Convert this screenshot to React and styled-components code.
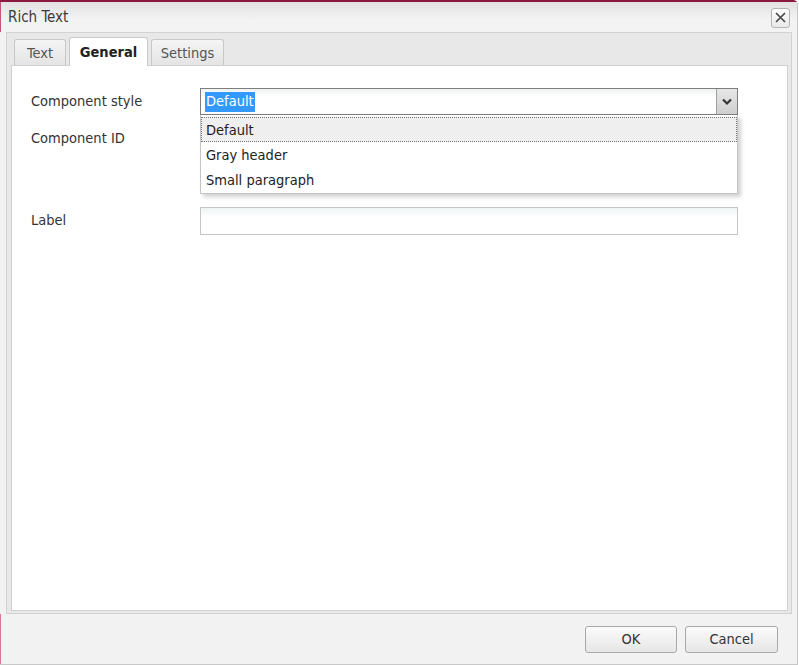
import React from 'react'
import styled, { createGlobalStyle } from 'styled-components'

const GlobalStyle = createGlobalStyle`
  html, body {
    margin: 0;
    padding: 0;
    background: #ffffff;
  }
  body {
    font-family: "DejaVu Sans Condensed", "Liberation Sans", sans-serif;
    font-size: 14.5px;
    color: #2a2a2a;
  }
`

const Dialog = styled.div`
  width: 798px;
  height: 665px;
  box-sizing: border-box;
  display: flex;
  flex-direction: column;
  background: #f2f2f2;
  border-top: 2px solid #8c1a3f;
  border-right: 1px solid #c6c6c6;
  border-top-right-radius: 5px;
`

const TitleBar = styled.div`
  height: 30px;
  flex: none;
  display: flex;
  align-items: center;
  justify-content: space-between;
  padding: 0 7px 0 8px;
  background: linear-gradient(#e2e2e2, #f3f3f3 60%);
  box-shadow: inset 7px 0 0 -6px #c0567a;
`

const Title = styled.span`
  font-size: 15px;
  color: #3a3a3a;
`

const CloseButton = styled.button`
  width: 19px;
  height: 20px;
  padding: 0;
  margin-top: 1px;
  display: flex;
  align-items: center;
  justify-content: center;
  border: 1px solid #b4b4b4;
  border-radius: 3px;
  background: linear-gradient(#fdfdfd, #e9e9e9);
`

const Panel = styled.div`
  flex: 1;
  margin: 0 5px 0 6px;
  display: flex;
  flex-direction: column;
  background: #e8e8e8;
  border: 1px solid #d2d2d2;
  padding: 2px 3px 2px 4px;
`

const TabStrip = styled.div`
  display: flex;
  align-items: flex-end;
  gap: 3px;
  padding-left: 3px;
  height: 30px;
  flex: none;
`

const Tab = styled.div`
  width: ${p => p.$w}px;
  height: ${p => (p.$active ? 29 : 26)}px;
  box-sizing: border-box;
  display: flex;
  align-items: center;
  justify-content: center;
  border: 1px solid #c8c8c8;
  border-bottom: none;
  border-radius: 3px 3px 0 0;
  background: ${p => (p.$active ? '#ffffff' : 'linear-gradient(#f4f4f4, #e4e4e4)')};
  color: ${p => (p.$active ? '#222' : '#555')};
  font-weight: ${p => (p.$active ? 'bold' : 'normal')};
  margin-bottom: ${p => (p.$active ? -1 : 0)}px;
  position: relative;
`

const Content = styled.div`
  flex: 1;
  background: #ffffff;
  border: 1px solid #d0d0d0;
  padding: 22px 0 0 19px;
`

const Form = styled.div`
  display: grid;
  grid-template-columns: 169px 538px;
  row-gap: 10px;
`

const Label = styled.div`
  color: #333;
  padding-top: ${p => p.$top}px;
`

const Field = styled.div`
  position: relative;
  height: ${p => p.$h}px;
  margin-bottom: ${p => p.$mb || 0}px;
`

const SelectBox = styled.div`
  height: 27px;
  box-sizing: border-box;
  display: flex;
  border: 1px solid #7e7e7e;
  background: linear-gradient(#eef2f2, #ffffff 30%);
`

const SelectValue = styled.div`
  flex: 1;
  display: flex;
  align-items: center;
  padding-left: 4px;
`

const Selected = styled.span`
  background: #3399ff;
  color: #ffffff;
  padding: 1px 1px 2px;
  line-height: 17px;
`

const ArrowButton = styled.div`
  width: 20px;
  display: flex;
  align-items: center;
  justify-content: center;
  border-left: 1px solid #a0a0a0;
  background: linear-gradient(#e6e6e6, #cfcfcf);
`

const DropList = styled.div`
  position: absolute;
  left: 0;
  top: 27px;
  width: 538px;
  box-sizing: border-box;
  background: #ffffff;
  border: 1px solid #c4c4c4;
  border-top: none;
  padding: 2px 0 1px;
  box-shadow: 3px 3px 4px rgba(0, 0, 0, 0.18);
  z-index: 2;
`

const Option = styled.div`
  height: 25px;
  box-sizing: border-box;
  display: flex;
  align-items: center;
  padding-left: 4px;
  color: #222;
  background: ${p => (p.$current ? '#efefef' : 'transparent')};
  border: 1px dotted ${p => (p.$current ? '#777' : 'transparent')};
`

const TextInput = styled.div`
  height: 28px;
  box-sizing: border-box;
  border: 1px solid #c4c4c4;
  background: linear-gradient(#eef3f3, #ffffff 35%);
`

const Footer = styled.div`
  height: 50px;
  flex: none;
  display: flex;
  align-items: center;
  justify-content: flex-end;
  gap: 8px;
  padding: 0 19px 0 0;
  border-bottom: 1px solid #c8c8c8;
  box-shadow: inset 7px 0 0 -6px #d57a9a;
`

const Button = styled.button`
  width: ${p => p.$w}px;
  height: 27px;
  font-family: inherit;
  font-size: 14.5px;
  color: #333;
  border: 1px solid #a9a9a9;
  border-radius: 3px;
  background: linear-gradient(#fbfbfb, #e6e6e6);
`

export default function App() {
  return (
    <>
      <GlobalStyle />
      <Dialog>
        <TitleBar>
          <Title>Rich Text</Title>
          <CloseButton>
            <svg width="13" height="13" viewBox="0 0 13 13">
              <path d="M2 2 L11 11 M11 2 L2 11" stroke="#4a4a4a" strokeWidth="1.7" fill="none" />
            </svg>
          </CloseButton>
        </TitleBar>

        <Panel>
          <TabStrip>
            <Tab $w={52}>Text</Tab>
            <Tab $w={79} $active>General</Tab>
            <Tab $w={73}>Settings</Tab>
          </TabStrip>

          <Content>
            <Form>
              <Label $top={5}>Component style</Label>
              <Field $h={27}>
                <SelectBox>
                  <SelectValue>
                    <Selected>Default</Selected>
                  </SelectValue>
                  <ArrowButton>
                    <svg width="12" height="8" viewBox="0 0 12 8">
                      <path d="M2 1.5 L6 5.5 L10 1.5" stroke="#333" strokeWidth="2.2" fill="none" />
                    </svg>
                  </ArrowButton>
                </SelectBox>
                <DropList>
                  <Option $current>Default</Option>
                  <Option>Gray header</Option>
                  <Option>Small paragraph</Option>
                </DropList>
              </Field>

              <Label $top={5}>Component ID</Label>
              <Field $h={58} $mb={14}>
                <TextInput />
              </Field>

              <Label $top={5}>Label</Label>
              <Field $h={28}>
                <TextInput />
              </Field>
            </Form>
          </Content>
        </Panel>

        <Footer>
          <Button $w={92}>OK</Button>
          <Button $w={93}>Cancel</Button>
        </Footer>
      </Dialog>
    </>
  )
}
